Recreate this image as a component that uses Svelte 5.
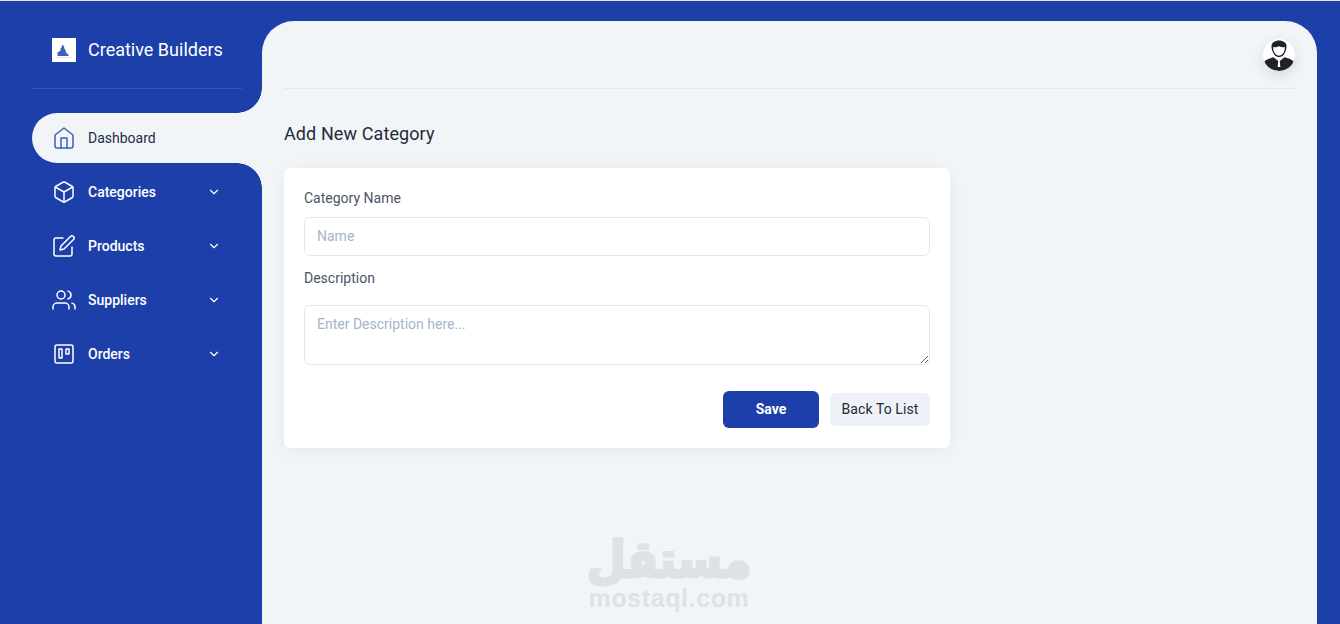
<script>
	const navItems = [
		{ label: 'Categories', icon: 'box' },
		{ label: 'Products', icon: 'edit' },
		{ label: 'Suppliers', icon: 'users' },
		{ label: 'Orders', icon: 'trello' }
	];
</script>

<div class="layout">
	<aside class="sidebar">
		<div class="brand">
			<span class="brand-logo">
				<svg viewBox="0 0 24 24" width="24" height="24">
					<path d="M5.500 18v-4h1.500v-1h1.500v-3h1v-1l1-2.500 1.500 2 .5 2.500h.5l1.500 4.500h1l1.500 2.500z" fill="#3f62b8" />
					<path d="M4 19.500h16" stroke="#dbe2f1" stroke-width="1" />
				</svg>
			</span>
			<span class="brand-name">Creative Builders</span>
		</div>
		<nav>
			<a class="nav-item active" href="#dashboard">
				<svg class="icon" viewBox="0 0 24 24">
					<path d="M3 9l9-7 9 7v11a2 2 0 0 1-2 2H5a2 2 0 0 1-2-2z" />
					<path d="M9 22V12h6v10" />
				</svg>
				<span>Dashboard</span>
			</a>
			{#each navItems as item}
				<a class="nav-item" href="#{item.label}">
					<svg class="icon" viewBox="0 0 24 24">
						{#if item.icon === 'box'}
							<path d="M21 16V8a2 2 0 0 0-1-1.730l-7-4a2 2 0 0 0-2 0l-7 4A2 2 0 0 0 3 8v8a2 2 0 0 0 1 1.730l7 4a2 2 0 0 0 2 0l7-4A2 2 0 0 0 21 16z" />
							<path d="M3.300 7 12 12l8.700-5M12 22V12" />
						{:else if item.icon === 'edit'}
							<path d="M11 4H4a2 2 0 0 0-2 2v14a2 2 0 0 0 2 2h14a2 2 0 0 0 2-2v-7" />
							<path d="M18.500 2.500a2.120 2.120 0 0 1 3 3L12 15l-4 1 1-4z" />
						{:else if item.icon === 'users'}
							<path d="M17 21v-2a4 4 0 0 0-4-4H5a4 4 0 0 0-4 4v2" />
							<circle cx="9" cy="7" r="4" />
							<path d="M23 21v-2a4 4 0 0 0-3-3.870M16 3.130a4 4 0 0 1 0 7.750" />
						{:else}
							<rect x="3" y="3" width="18" height="18" rx="2" />
							<rect x="7" y="7" width="3" height="9" />
							<rect x="14" y="7" width="3" height="5" />
						{/if}
					</svg>
					<span>{item.label}</span>
					<svg class="chevron" viewBox="0 0 24 24"><path d="M6 9l6 6 6-6" /></svg>
				</a>
			{/each}
		</nav>
	</aside>

	<main class="content">
		<header class="topbar">
			<span class="avatar">
				<svg viewBox="0 0 32 32" width="32" height="32">
					<path d="M8.500 7c0-3.200 3.500-5.500 7.500-5.500s7.500 2.300 7.500 5.500c0 2.800-.8 6.300-3 9-1.300 1.500-3 2-4.500 2s-3.200-.5-4.500-2c-2.200-2.700-3-6.200-3-9z" fill="#1f2229" />
					<path d="M10.200 8c1.900.5 3.800.2 5.800-.7 2 .9 3.900 1.200 5.800.7.200 3-.7 5.300-2.300 7.100-1 1.100-2.300 1.700-3.500 1.700s-2.500-.6-3.500-1.700C10.900 13.300 10 11 10.200 8z" fill="#fff" />
					<path d="M1 23c2-2.800 6.500-4 9.500-4.700L15.200 22l-.5 6h2.600l-.5-6 4.700-3.700c3 .7 7.500 1.900 9.500 4.700-1.500 5.500-8 9-15 9S2.500 28.500 1 23z" fill="#1f2229" />
				</svg>
			</span>
		</header>

		<h2 class="title">Add New Category</h2>

		<form class="card" on:submit|preventDefault>
			<label for="cat-name">Category Name</label>
			<input id="cat-name" type="text" placeholder="Name" />
			<label class="desc-label" for="cat-desc">Description</label>
			<textarea id="cat-desc" placeholder="Enter Description here..."></textarea>
			<div class="actions">
				<button type="submit" class="btn-save">Save</button>
				<button type="button" class="btn-back">Back To List</button>
			</div>
		</form>

		<div class="watermark">
			<span class="wm-ar" dir="rtl">مستقل</span>
			<span class="wm-en">mostaql.com</span>
		</div>
	</main>
</div>

<style>
	:global(body) {
		margin: 0;
		overflow: hidden;
	}

	.layout {
		display: flex;
		height: 624px;
		box-sizing: border-box;
		border-top: 1px solid #e4e7ea;
		background: #1c3faa;
		font-family: Roboto, sans-serif;
		color: #2d3748;
		overflow: hidden;
	}

	.sidebar {
		width: 262px;
		flex-shrink: 0;
		box-sizing: border-box;
		padding-left: 32px;
	}

	.brand {
		position: relative;
		z-index: 1;
		display: flex;
		align-items: center;
		gap: 12px;
		width: 210px;
		height: 88px;
		box-sizing: border-box;
		padding: 10px 0 0 20px;
		border-bottom: 1px solid rgba(255, 255, 255, 0.12);
		margin-bottom: 24px;
	}

	.brand-logo {
		display: block;
		width: 24px;
		height: 24px;
		background: #fff;
	}

	.brand-name {
		font-size: 18px;
		font-weight: 400;
		color: #fff;
	}

	nav {
		display: flex;
		flex-direction: column;
		gap: 4px;
	}

	.nav-item {
		position: relative;
		display: flex;
		align-items: center;
		height: 50px;
		padding-left: 20px;
		color: #fff;
		font-size: 14px;
		font-weight: 500;
		text-decoration: none;
	}

	.nav-item.active {
		background: #f1f5f8;
		color: #232b45;
		border-radius: 25px 0 0 25px;
		font-weight: 400;
	}

	.nav-item.active::before,
	.nav-item.active::after {
		content: '';
		position: absolute;
		right: 0;
		width: 25px;
		height: 25px;
	}

	.nav-item.active::before {
		top: -25px;
		background: radial-gradient(circle at 0 0, #1c3faa 24.500px, #f1f5f8 25px);
	}

	.nav-item.active::after {
		bottom: -25px;
		background: radial-gradient(circle at 0 100%, #1c3faa 24.500px, #f1f5f8 25px);
	}

	.icon {
		width: 24px;
		height: 24px;
		margin-right: 12px;
		fill: none;
		stroke: currentColor;
		stroke-width: 1.500;
		stroke-linecap: round;
		stroke-linejoin: round;
	}

	.active .icon {
		stroke: #3f62b8;
	}

	.chevron {
		position: absolute;
		left: 175px;
		width: 14px;
		height: 14px;
		fill: none;
		stroke: currentColor;
		stroke-width: 2;
		stroke-linecap: round;
		stroke-linejoin: round;
	}

	.content {
		position: relative;
		width: 1055px;
		flex-shrink: 0;
		height: 640px;
		margin-top: 20px;
		box-sizing: border-box;
		padding: 0 22px;
		background: #f1f5f8;
		border-radius: 32px;
	}

	.topbar {
		display: flex;
		justify-content: flex-end;
		align-items: flex-start;
		height: 68px;
		box-sizing: border-box;
		padding-top: 18px;
		border-bottom: 1px solid #e2e8f0;
	}

	.avatar {
		display: block;
		width: 32px;
		height: 32px;
		border-radius: 50%;
		background: #fff;
		box-shadow: 0 4px 14px rgba(0, 0, 0, 0.12);
		overflow: hidden;
	}

	.title {
		margin: 33px 0 22px;
		font-size: 18px;
		line-height: 24px;
		font-weight: 400;
		letter-spacing: 0.1px;
		color: #232b38;
	}

	.card {
		display: flex;
		flex-direction: column;
		width: 666px;
		height: 280px;
		box-sizing: border-box;
		padding: 20px;
		background: #fff;
		border-radius: 6px;
		box-shadow: 0 3px 20px rgba(0, 0, 0, 0.05);
	}

	label {
		font-size: 14px;
		line-height: 20px;
		font-weight: 400;
		color: #4a5568;
		margin-bottom: 9px;
	}

	.desc-label {
		margin-top: 12px;
		margin-bottom: 17px;
	}

	input,
	textarea {
		box-sizing: border-box;
		width: 100%;
		padding: 0 12px;
		border: 1px solid #e2e8f0;
		border-radius: 6px;
		background: #fff;
		font-family: Roboto, sans-serif;
		font-size: 14px;
		color: #2d3748;
		outline: none;
	}

	input {
		height: 39px;
		padding-bottom: 1px;
	}

	textarea {
		display: block;
		height: 60px;
		padding-top: 10px;
	}

	input::placeholder,
	textarea::placeholder {
		color: #a6b3cd;
		opacity: 1;
	}

	.actions {
		display: flex;
		justify-content: flex-end;
		align-items: center;
		gap: 11px;
		margin-top: 26px;
	}

	button {
		font-family: Roboto, sans-serif;
		font-size: 14px;
		border: none;
		border-radius: 6px;
		cursor: pointer;
	}

	.btn-save {
		width: 96px;
		height: 37px;
		padding-bottom: 2px;
		background: #1c3faa;
		color: #fff;
		font-weight: 700;
	}

	.btn-back {
		width: 100px;
		height: 33px;
		padding-bottom: 2px;
		background: #eef1f6;
		color: #232b38;
		font-weight: 400;
		letter-spacing: 0.1px;
	}

	.watermark {
		position: absolute;
		left: 326px;
		top: 514px;
		width: 162px;
		display: flex;
		flex-direction: column;
		align-items: center;
		color: #dde2e6;
		font-weight: 700;
	}

	.wm-ar {
		font-family: 'DejaVu Sans', sans-serif;
		font-size: 45px;
		line-height: 50px;
		height: 50px;
		-webkit-text-stroke: 2.500px #dde2e6;
		transform: scaleY(1.12);
	}

	.wm-en {
		font-family: 'Liberation Sans', sans-serif;
		font-size: 25px;
		line-height: 26px;
		letter-spacing: 0.6px;
	}
</style>
